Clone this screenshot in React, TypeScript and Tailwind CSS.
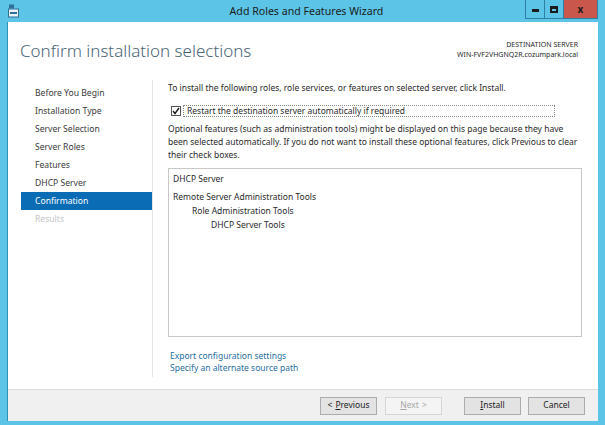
import React from "react";

const font = { fontFamily: '"Noto Sans", "Open Sans", sans-serif' };

function NavItem({ label, state }: { label: string; state?: "active" | "disabled" }) {
  const base = "h-[18px] flex items-center pl-[14px] text-[8.6px] leading-none";
  if (state === "active")
    return <div className={`${base} bg-[#0a6cb5] text-white`}>{label}</div>;
  if (state === "disabled")
    return <div className={`${base} text-[#c4c4c4]`}>{label}</div>;
  return <div className={`${base} text-[#3a3a3a]`}>{label}</div>;
}

function Btn({ children, disabled }: { children: React.ReactNode; disabled?: boolean }) {
  return (
    <div
      className={`w-[57px] h-[18px] flex items-center justify-center text-[8.5px] leading-none border ${
        disabled
          ? "border-[#d6d6d6] bg-[#f4f4f4] text-[#a8a8a8]"
          : "border-[#acacac] bg-[#e3e3e3] text-[#222]"
      }`}
    >
      {children}
    </div>
  );
}

export default function App() {
  return (
    <div style={font} className="w-[605px] h-[425px] bg-[#5cc4e6] flex flex-col overflow-hidden">
      {/* Title bar */}
      <div className="h-[22px] grid grid-cols-[minmax(0,1fr)_auto_minmax(0,1fr)] items-start">
        <div className="pt-[4px] pl-[8px]">
          <svg width="11" height="14" viewBox="0 0 11 14">
            <rect x="1" y="0.5" width="5" height="4" fill="#2f6f9a" />
            <rect x="0.5" y="5" width="10" height="8" fill="#e8f2f8" stroke="#2f6f9a" strokeWidth="1" />
            <rect x="2" y="8" width="7" height="2" fill="#2f6f9a" />
          </svg>
        </div>
        <div className="text-center text-[10.6px] leading-[22px] text-[#1b1b1b] pl-[8px]">
          Add Roles and Features Wizard
        </div>
        <div className="flex justify-end">
          <div className="flex h-[19px] mr-[7px] border border-t-0 border-[#2d7fa3]">
            <div className="w-[19px] h-full flex items-center justify-center border-r border-[#2d7fa3]">
              <div className="w-[7px] h-[3px] bg-[#1b1b1b] mt-[3px]" />
            </div>
            <div className="w-[19px] h-full flex items-center justify-center border-r border-[#2d7fa3]">
              <div className="w-[8px] h-[7px] border-[2px] border-[#1b1b1b] border-t-[3px]" />
            </div>
            <div className="w-[33px] h-full flex items-center justify-center bg-[#c9574c] text-[#1b1b1b] text-[10px] font-bold leading-none">
              x
            </div>
          </div>
        </div>
      </div>

      {/* Window body */}
      <div className="flex-1 flex mx-[7px] mb-[4px] bg-white flex-col border-l border-[#2a92bb]">
        {/* Header */}
        <div className="h-[58px] flex items-start justify-between pl-[12px] pr-[20px]">
          <div className="pt-[17px] text-[17px] leading-[24px] font-light text-[#4a6676]">
            Confirm installation selections
          </div>
          <div className="pt-[18px] text-right text-[7px] leading-[10px] text-[#2a2a2a]">
            <div>DESTINATION SERVER</div>
            <div>WIN-FVF2VHGNQ2R.cozumpark.local</div>
          </div>
        </div>

        {/* Middle */}
        <div className="flex-1 flex">
          <div className="w-[145px] flex flex-col">
            <div className="flex-1 border-r border-[#e4e4e4] pt-[4px] pl-[13px] mb-[12px]">
              <NavItem label="Before You Begin" />
              <NavItem label="Installation Type" />
              <NavItem label="Server Selection" />
              <NavItem label="Server Roles" />
              <NavItem label="Features" />
              <NavItem label="DHCP Server" />
              <NavItem label="Confirmation" state="active" />
              <NavItem label="Results" state="disabled" />
            </div>
          </div>
          <div className="flex-1 pl-[15px] pr-[16px] pt-[1px] text-[8.5px] leading-[13px] text-[#2a2a2a]">
            <div>To install the following roles, role services, or features on selected server, click Install.</div>
            <div className="mt-[10px] flex items-center h-[13px]">
              <div className="ml-[3px] w-[10px] h-[10px] border border-[#555] flex items-center justify-center bg-white">
                <svg width="8" height="8" viewBox="0 0 8 8">
                  <path d="M1 4 L3 6.5 L7 1" fill="none" stroke="#1b1b1b" strokeWidth="1.4" />
                </svg>
              </div>
              <div className="ml-[2px] flex-1 mr-[27px] h-[12px] border border-dotted border-[#888] flex items-center pl-[3px]">
                Restart the destination server automatically if required
              </div>
            </div>
            <div className="mt-[5px] pr-[2px]">
              Optional features (such as administration tools) might be displayed on this page because they have been selected automatically. If you do not want to install these optional features, click Previous to clear their check boxes.
            </div>
            <div className="mt-[7px] h-[169px] border border-[#c8c8c8] pl-[4px] pt-[3px]">
              <div className="mb-[5px]">DHCP Server</div>
              <div className="leading-[14px]">Remote Server Administration Tools</div>
              <div className="leading-[14px] pl-[19px]">Role Administration Tools</div>
              <div className="leading-[14px] pl-[38px]">DHCP Server Tools</div>
            </div>
            <div className="mt-[13px] pl-[2px] leading-[12px] text-[#1f6ea0]">
              <div>Export configuration settings</div>
              <div>Specify an alternate source path</div>
            </div>
          </div>
        </div>

        {/* Footer */}
        <div className="h-[32px] bg-[#f0f0f0] border-t border-[#dcdcdc] flex items-center justify-end pr-[13px]">
          <Btn>
            <span className="mr-[3px]">&lt;</span>
            <span className="underline">P</span>revious
          </Btn>
          <div className="ml-[8px]">
            <Btn disabled>
              <span className="underline">N</span>ext
              <span className="ml-[3px]">&gt;</span>
            </Btn>
          </div>
          <div className="ml-[22px]">
            <Btn>
              <span className="underline">I</span>nstall
            </Btn>
          </div>
          <div className="ml-[7px]">
            <Btn>Cancel</Btn>
          </div>
        </div>
      </div>
    </div>
  );
}
